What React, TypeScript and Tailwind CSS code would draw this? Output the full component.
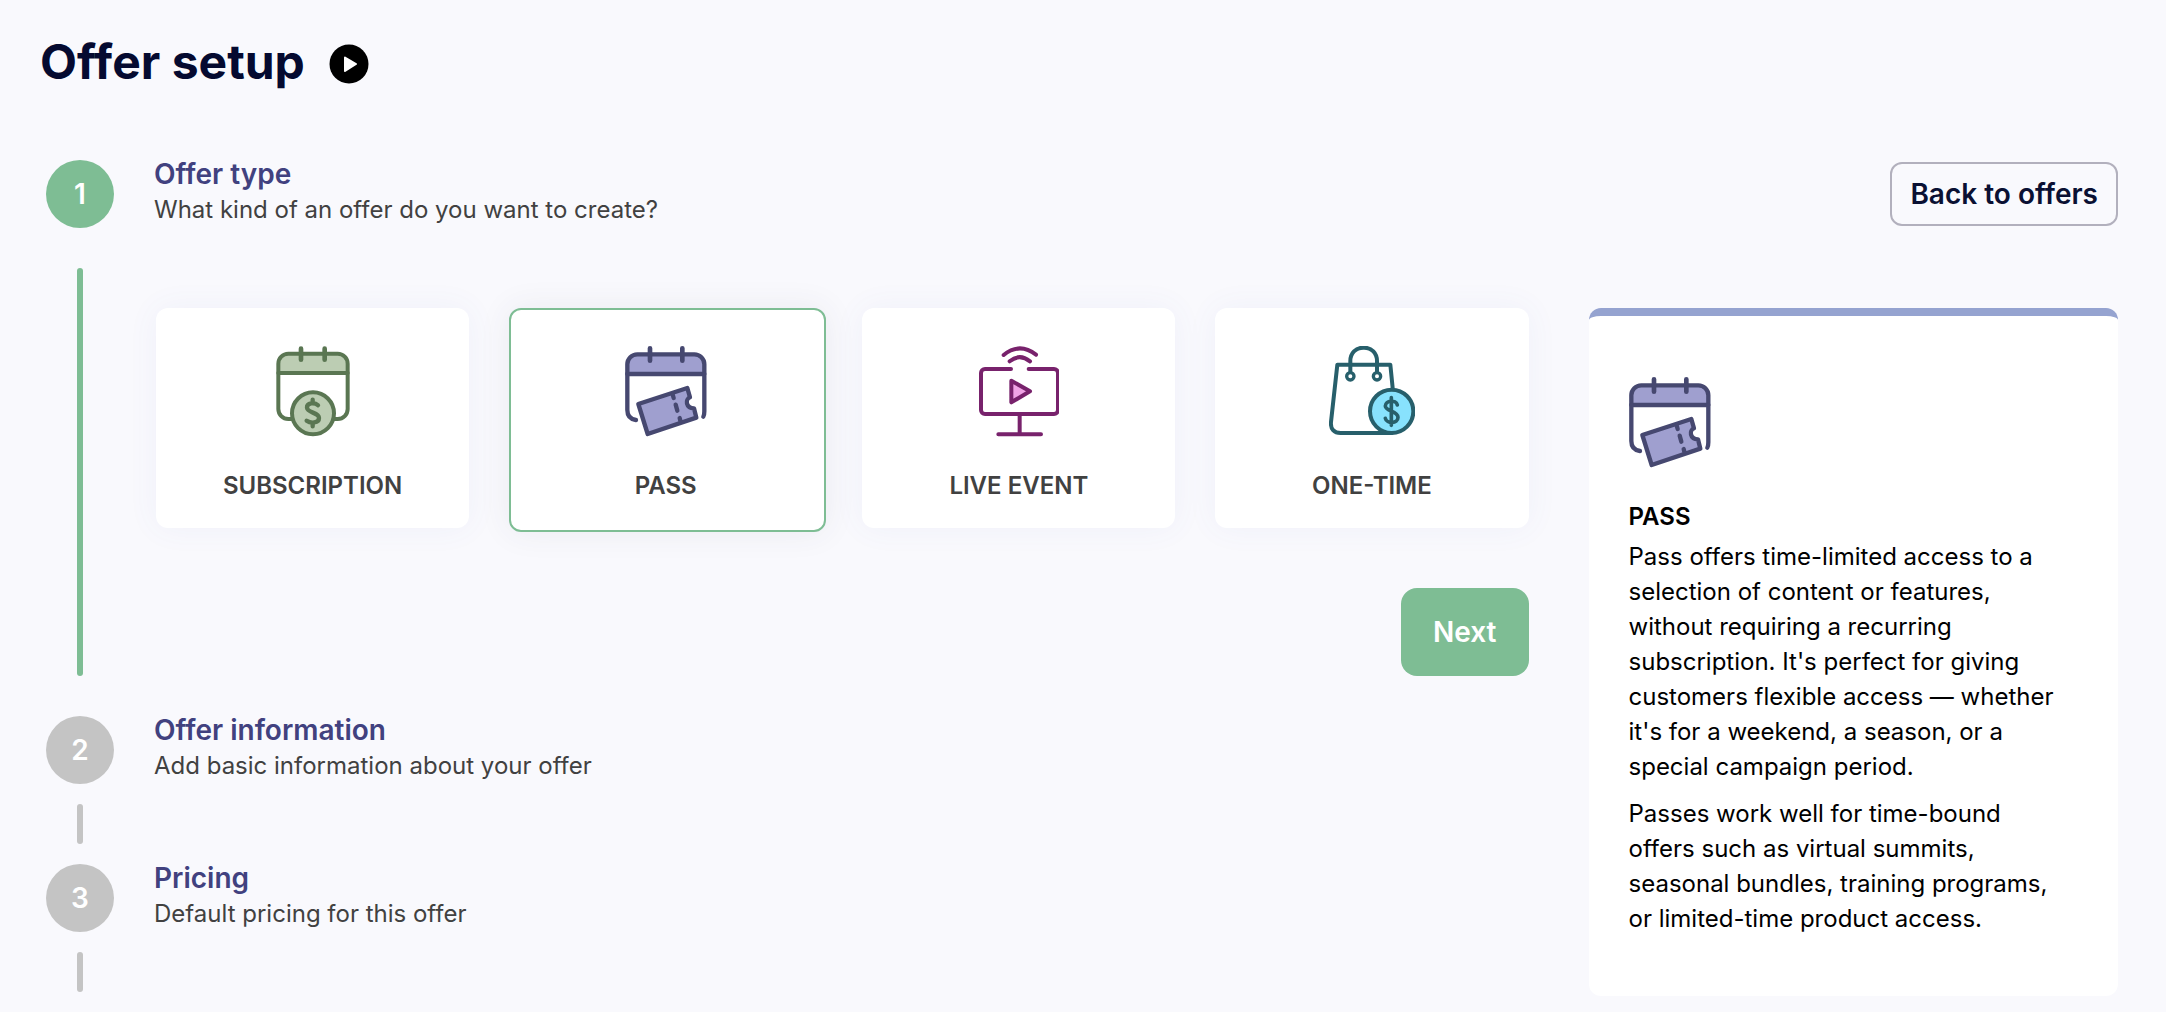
import React, { useState } from 'react';
import clsx from 'clsx';


const SubscriptionIcon: React.FC = () => (
  <svg className="h-[91px] w-[74px]" viewBox="408 168 222 273" fill="none" stroke="#5a7652" strokeWidth={12} strokeLinecap="round" strokeLinejoin="round">
    <path d="M415 249 V221 a30 30 0 0 1 30 -30 H593 a30 30 0 0 1 30 30 V249 Z" fill="#bccdb3" />
    <path d="M415 249 V357 a30 30 0 0 0 30 30 H593 a30 30 0 0 0 30 -30 V249" />
    <path d="M483 176 V209 M554 176 V209" strokeWidth={14} />
    <circle cx="519" cy="370" r="63" fill="#bccdb3" />
    <path d="M534 346 C524 336 500 338 501 353 C502 369 537 367 537 384 C537 400 512 401 500 392 M518 329 V338 M518 399 V409" strokeWidth={13} />
  </svg>
);

const PassIcon: React.FC = () => (
  <svg className="h-[91px] w-[82px]" viewBox="404 168 246 273" fill="none" stroke="#464870" strokeWidth={13} strokeLinecap="round" strokeLinejoin="round">
    <path d="M411 252 V223 a30 30 0 0 1 30 -30 H612 a30 30 0 0 1 30 30 V252 Z" fill="#9f9fcf" />
    <path d="M411 252 V360 C411 378 421 388 437 390" />
    <path d="M642 252 V364 C642 371 641 377 639 380" />
    <path d="M479 175 V212 M576 175 V212" strokeWidth={14} />
    <path d="M444 342 L591 294 L599 322 C584 328 586 354 611 355 L618 383 L472 432 Z" fill="#9f9fcf" />
    <path d="M547 314 L550 324 M556 344 L561 362 M568 384 L570 392" />
  </svg>
);

const LiveEventIcon: React.FC = () => (
  <svg className="h-[91px] w-20" viewBox="387 168 240 273" fill="none" stroke="#78226c" strokeWidth={12} strokeLinecap="round" strokeLinejoin="round">
    <path d="M461 195 Q509 156 558 194 M479 214 Q509 189 540 214" />
    <path d="M483 237 H405 a12 12 0 0 0 -12 12 V360 a12 12 0 0 0 12 12 H612 a12 12 0 0 0 12 -12 V249 a12 12 0 0 0 -12 -12 H536" />
    <path d="M484 272 L540 304 L484 337 Z" fill="#f0a3e5" />
    <path d="M509 378 V430 M445 433 H573" />
  </svg>
);

const OneTimeIcon: React.FC = () => (
  <svg className="h-[91px] w-[86px]" viewBox="387 168 258 273" fill="none" stroke="#275f6b" strokeWidth={12} strokeLinecap="round" strokeLinejoin="round">
    <path d="M578 294 L571 224 H412 L393 396 C391 417 402 429 422 429 H575" />
    <path d="M451 246 V213 C451 190 467 173 490 173 H492 C515 173 531 190 531 213 V246" />
    <circle cx="451" cy="259" r="11" strokeWidth={10} fill="#fff" />
    <circle cx="531" cy="259" r="11" strokeWidth={10} fill="#fff" />
    <circle cx="575" cy="364" r="65" fill="#88e2fd" />
    <path d="M592 345 C588 328 556 331 556 348 C556 364 594 362 594 382 C594 402 560 402 556 385 M574 323 V406" strokeWidth={11} />
  </svg>
);


const offerTypes = [
  { id: 'subscription', label: 'SUBSCRIPTION', Icon: SubscriptionIcon },
  { id: 'pass', label: 'PASS', Icon: PassIcon },
  { id: 'live', label: 'LIVE EVENT', Icon: LiveEventIcon },
  { id: 'one-time', label: 'ONE-TIME', Icon: OneTimeIcon },
];


interface StepProps {
  number: number;
  title: string;
  caption: string;
  active?: boolean;
  children?: React.ReactNode;
}

const Step: React.FC<StepProps> = ({ number, title, caption, active, children }) => {
  return (
    <li className="flex gap-10">
      <div className={clsx('flex shrink-0 flex-col items-center', active ? 'gap-10 pb-10' : 'gap-5 pb-5')}>
        <span
          className={clsx(
            'flex size-17 items-center justify-center rounded-full text-[28px] font-semibold text-white',
            active ? 'bg-[#7ebd94]' : 'bg-[#c4c4c4]'
          )}
        >
          {number}
        </span>
        <span className={clsx('min-h-10 w-1.5 grow rounded-full', active ? 'bg-[#7ebd94]' : 'bg-[#c4c4c4]')} />
      </div>
      <div className={clsx('min-w-0 grow', active && 'pb-10')}>
        <h2 className="text-[28px] leading-7 font-semibold text-[#41417f]">{title}</h2>
        <p className="mt-1 text-2xl leading-9 text-[#414141]">{caption}</p>
        {children}
      </div>
    </li>
  );
};


export default function App() {
  const [selected, setSelected] = useState('pass');

  return (
    <div className="min-h-screen bg-[#f9f9fd] pt-8 pr-12 pb-4 pl-10 font-['Inter',sans-serif]">
      <header className="flex items-center gap-6">
        <h1 className="text-5xl leading-[60px] font-bold text-[#050a30]">Offer setup</h1>
        <button type="button" aria-label="Play tutorial" className="mt-1 cursor-pointer">
          <svg className="size-10" viewBox="0 0 40 40">
            <circle cx="20" cy="20" r="19.5" />
            <path d="M16 13.5 L27 20 L16 27 Z" fill="#fff" stroke="#fff" strokeWidth={2} strokeLinejoin="round" />
          </svg>
        </button>
      </header>

      <div className="mt-17 ml-1.5 grid grid-cols-[14fr_5fr] items-start gap-15">
        <ol>
          <Step number={1} title="Offer type" caption="What kind of an offer do you want to create?" active>
            <div className="mt-20 ml-0.5 grid grid-cols-4 gap-10">
              {offerTypes.map(({ id, label, Icon }) => (
                <button
                  key={id}
                  type="button"
                  aria-pressed={selected === id}
                  onClick={() => setSelected(id)}
                  className={clsx(
                    'flex cursor-pointer flex-col items-center rounded-xl bg-white pb-[26px]',
                    selected === id
                      ? '-mr-1 -mb-1 border-2 border-[#7ebd94] pt-9 pr-1 shadow-[0_0_32px_rgba(60,60,90,0.08)]'
                      : 'pt-[38px] shadow-[0_0_32px_rgba(90,110,190,0.06)]'
                  )}
                >
                  <Icon />
                  <span className="mt-8 text-2xl leading-[33px] font-semibold text-[#414141]">{label}</span>
                </button>
              ))}
            </div>
            <div className="mt-15 flex justify-end">
              <button
                type="button"
                className="h-22 cursor-pointer rounded-2xl bg-[#7ebd94] px-8 text-[28px] font-semibold text-white"
              >
                Next
              </button>
            </div>
          </Step>
          <Step number={2} title="Offer information" caption="Add basic information about your offer" />
          <Step number={3} title="Pricing" caption="Default pricing for this offer" />
        </ol>

        <div className="pt-0.5">
          <div className="flex justify-end">
            <button
              type="button"
              className="h-16 cursor-pointer rounded-xl border-2 border-[#b2b0bd] px-[18px] text-[28px] font-semibold text-[#0a1033]"
            >
              Back to offers
            </button>
          </div>
          <aside className="mt-[82px] rounded-xl border-t-8 border-[#95a3d0] bg-white pt-[61px] pr-15 pb-15 pl-10 text-2xl leading-[35px] text-black">
            <PassIcon />
            <h3 className="mt-8 leading-[33px] font-semibold">PASS</h3>
            <p className="mt-1.5">
              Pass offers time-limited access to a selection of content or features, without requiring a recurring
              subscription. It's perfect for giving customers flexible access — whether it's for a weekend, a season,
              or a special campaign period.
            </p>
            <p className="mt-3">
              Passes work well for time-bound offers such as virtual summits, seasonal bundles, training programs, or
              limited-time product access.
            </p>
          </aside>
        </div>
      </div>
    </div>
  );
}
